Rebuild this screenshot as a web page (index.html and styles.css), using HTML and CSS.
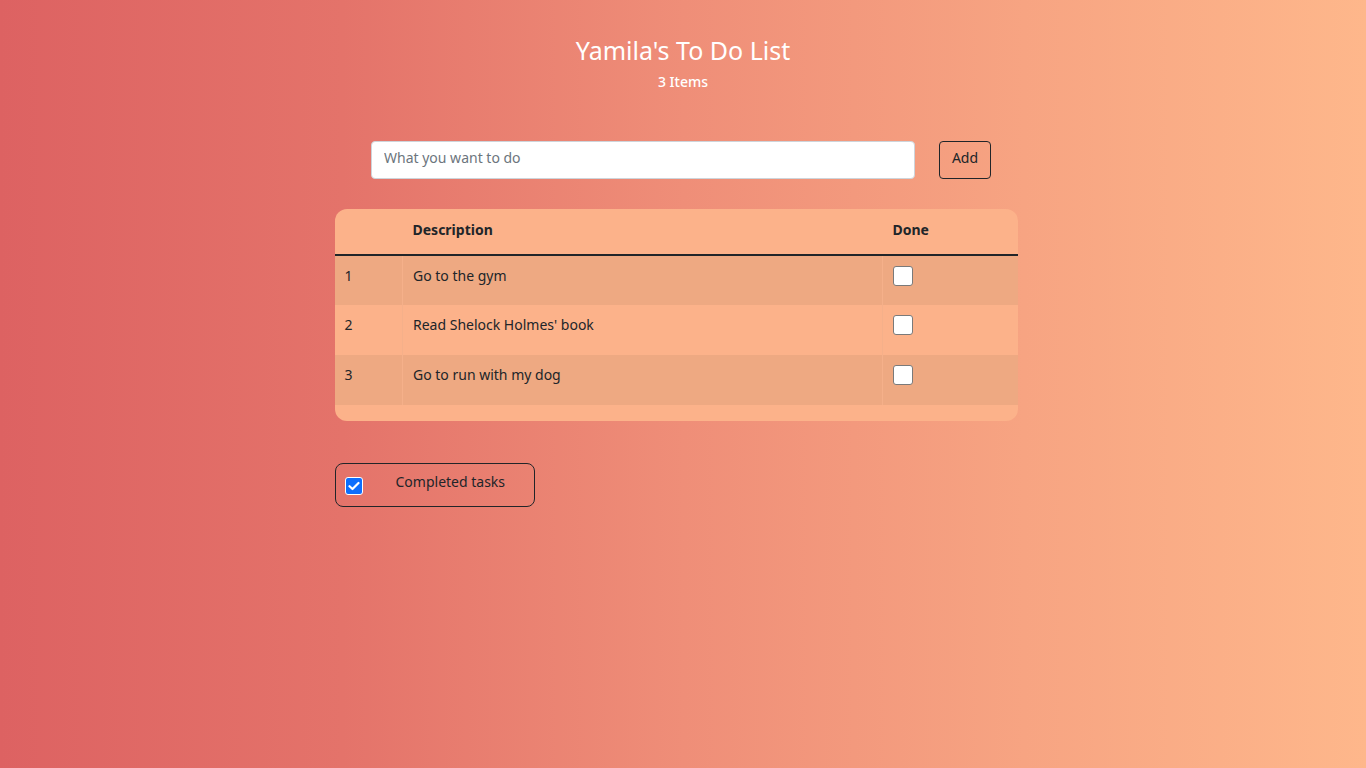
FILE: index.html
```html
<!DOCTYPE html>
<html lang="en">
<head>
<meta charset="utf-8">
<title>Yamila's To Do List</title>
<link rel="stylesheet" href="styles.css">
</head>
<body>
<div class="page">
  <header class="head">
    <h1 class="title">Yamila's To Do List</h1>
    <p class="count">3 Items</p>
  </header>
  <div class="add-row">
    <input class="task-input" type="text" placeholder="What you want to do">
    <button class="add-btn" type="button">Add</button>
  </div>
  <div class="table-card">
    <table class="tasks">
      <thead>
        <tr><th class="c-num"></th><th class="c-desc">Description</th><th class="c-done">Done</th></tr>
      </thead>
      <tbody>
        <tr class="odd"><td class="c-num">1</td><td class="c-desc">Go to the gym</td><td class="c-done"><span class="box"></span></td></tr>
        <tr><td class="c-num">2</td><td class="c-desc">Read Shelock Holmes' book</td><td class="c-done"><span class="box"></span></td></tr>
        <tr class="odd"><td class="c-num">3</td><td class="c-desc">Go to run with my dog</td><td class="c-done"><span class="box"></span></td></tr>
      </tbody>
    </table>
  </div>
  <div class="completed">
    <span class="check"><svg width="12" height="10" viewBox="0 0 12 10"><path d="M1.5 5.2 L4.5 8 L10.5 2" fill="none" stroke="#fff" stroke-width="2.2" stroke-linecap="round" stroke-linejoin="round"/></svg></span>
    <span class="completed-label">Completed tasks</span>
  </div>
</div>
</body>
</html>
```
FILE: styles.css
```css
* { box-sizing: border-box; }
html, body { margin: 0; height: 100%; }
body {
  background: linear-gradient(90deg, #dd6262 0%, #e4736a 25%, #ef8e78 50%, #f7a482 75%, #feb78b 100%);
  font-family: "Noto Sans", "DejaVu Sans", sans-serif;
  color: #212529;
  min-height: 768px;
}
.page {
  width: 697px;
  margin: 0 auto;
  padding-top: 34px;
}
.head { text-align: center; color: #fff; }
.title {
  margin: 0;
  font-size: 25px;
  font-weight: 400;
  line-height: 32px;
}
.count {
  margin: 7px 0 0;
  font-size: 14px;
  font-weight: 500;
  line-height: 18px;
}
.add-row {
  display: flex;
  justify-content: center;
  gap: 24px;
  margin-top: 50px;
  padding-right: 4px;
}
.task-input {
  width: 544px;
  height: 38px;
  border: 1px solid #ced4da;
  border-radius: 4px;
  background: #fff;
  padding: 0 12px 5px;
  font-family: inherit;
  font-size: 14px;
  color: #212529;
}
.task-input::placeholder { color: #6c757d; }
.add-btn {
  width: 52px;
  height: 38px;
  border: 1px solid #212529;
  border-radius: 4px;
  background: transparent;
  font-family: inherit;
  font-size: 14px;
  color: #212529;
  padding: 0 0 5px;
}
.table-card {
  width: 683px;
  margin-top: 30px;
  background: #fcb28a;
  border-radius: 12px;
  padding-bottom: 16px;
  overflow: hidden;
}
.tasks {
  width: 100%;
  border-collapse: collapse;
  font-size: 14px;
}
.tasks th {
  text-align: left;
  font-weight: 700;
  height: 46px;
  padding: 0 10px 4px;
  border-bottom: 2px solid #212529;
}
.tasks td {
  height: 50px;
  padding: 10px 10px 0;
  vertical-align: top;
}
.tasks tr.odd td { background: #eea982; }
.tasks td + td { border-left: 1px solid #f5b08a; }
.c-num { width: 68px; }
.c-done { width: 135px; }
.box {
  display: inline-block;
  width: 20px;
  height: 20px;
  background: #fff;
  border: 1px solid #7a7a7a;
  border-radius: 3px;
}
.completed {
  margin-top: 42px;
  width: 200px;
  height: 44px;
  border: 1px solid #212529;
  border-radius: 8px;
  display: flex;
  align-items: flex-start;
  padding: 13px 0 0 9px;
}
.check {
  width: 18px;
  height: 18px;
  background: #0d6efd;
  border: 1px solid #fff;
  border-radius: 3px;
  display: flex;
  align-items: center;
  justify-content: center;
}
.completed-label {
  margin-left: 33px;
  margin-top: -5px;
  font-size: 14px;
  line-height: 20px;
}
```
